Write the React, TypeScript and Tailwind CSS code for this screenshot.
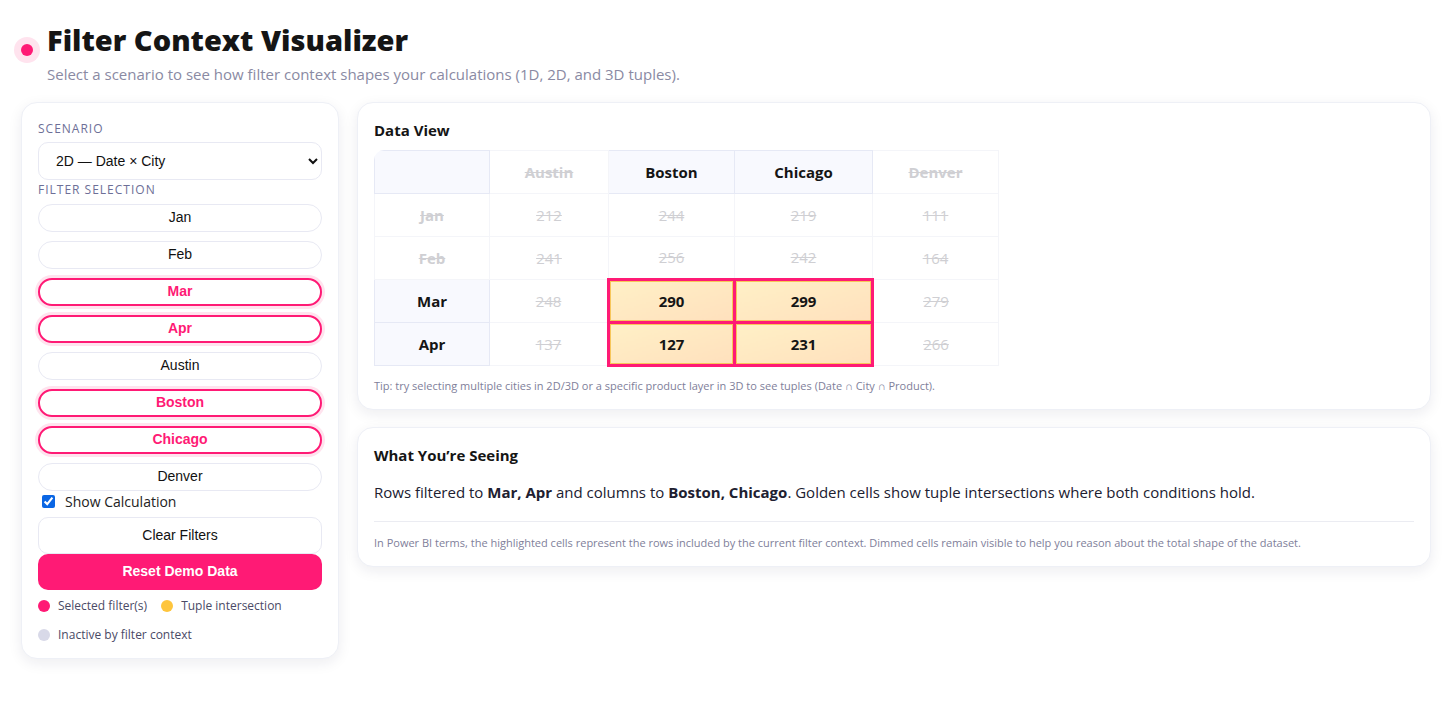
import React, { useState } from "react";

const months = ["Jan", "Feb", "Mar", "Apr"];
const cities = ["Austin", "Boston", "Chicago", "Denver"];
const data: Record<string, number[]> = {
    Jan: [212, 244, 219, 111],
    Feb: [241, 256, 242, 164],
    Mar: [248, 290, 299, 279],
    Apr: [137, 127, 231, 266],
};
const colWidths = ["w-[115px]", "w-[119px]", "w-[126px]", "w-[138px]", "w-[126px]"];

const ui = { fontFamily: '"Segoe UI", "Open Sans", "Noto Sans", sans-serif' };
const ctrl = { fontFamily: '"Liberation Sans", Arial, sans-serif' };

const FilterButton = ({ label, active, onClick }: { label: string; active: boolean; onClick: () => void }) => (
    <button
        onClick={onClick}
        style={ctrl}
        className={
            active
                ? "h-[28px] w-full rounded-full border-2 border-[#ff1a75] bg-white text-[14px] font-bold text-[#ff1a75] shadow-[0_0_0_3px_#ffe3ee]"
                : "h-[28px] w-full rounded-full border border-[#e8e9f3] bg-white text-[14px] text-[#111]"
        }
    >
        {label}
    </button>
);

const App = () => {
    const [selected, setSelected] = useState<string[]>(["Mar", "Apr", "Boston", "Chicago"]);
    const [showCalc, setShowCalc] = useState(true);
    const toggle = (k: string) =>
        setSelected((s) => (s.includes(k) ? s.filter((x) => x !== k) : [...s, k]));

    const rowOn = (m: string) => selected.includes(m);
    const colOn = (c: string) => selected.includes(c);

    return (
        <div style={ui} className="min-h-screen bg-white text-[#16162a]">
            <header className="flex gap-[14px] pl-[21px] pt-[22px]">
                <div className="mt-[22px] h-[12px] w-[12px] shrink-0 rounded-full bg-[#ff1a75] shadow-[0_0_0_7px_#ffe3ee]" />
                <div>
                    <h1 className="text-[29px] font-extrabold leading-[36px] text-[#151515]">
                        Filter Context Visualizer
                    </h1>
                    <p className="mt-[5px] text-[15px] text-[#8a8aa3]">
                        Select a scenario to see how filter context shapes your calculations (1D, 2D, and 3D tuples).
                    </p>
                </div>
            </header>

            <div className="mt-[16px] flex items-start gap-[18px] pl-[21px] pr-[14px]">
                {/* sidebar */}
                <aside className="w-[318px] shrink-0 rounded-[16px] border border-[#eef0f6] bg-white px-[16px] pb-[14px] pt-[17px] shadow-[0_4px_14px_rgba(30,30,70,0.08)]">
                    <div className="text-[12px] uppercase tracking-[1px] text-[#6d6f97]">Scenario</div>
                    <select
                        style={ctrl}
                        defaultValue="2d"
                        className="mt-[4px] h-[38px] w-full rounded-[10px] border border-[#e8e9f3] bg-white px-[13px] text-[14px] text-[#111]"
                    >
                        <option value="1d">1D — Date</option>
                        <option value="2d">2D — Date × City</option>
                        <option value="3d">3D — Date × City × Product</option>
                    </select>
                    <div className="mt-[1px] text-[12px] uppercase tracking-[1px] text-[#6d6f97]">Filter Selection</div>
                    <div className="mt-[5px] flex flex-col gap-[9px]">
                        {[...months, ...cities].map((k) => (
                            <FilterButton key={k} label={k} active={selected.includes(k)} onClick={() => toggle(k)} />
                        ))}
                    </div>
                    <label className="mt-[1px] flex items-center gap-[10px] pl-[4px] text-[14px] leading-[20px] text-[#222]">
                        <input
                            type="checkbox"
                            checked={showCalc}
                            onChange={(e) => setShowCalc(e.target.checked)}
                            className="h-[13px] w-[13px] accent-[#0a66e4]"
                        />
                        Show Calculation
                    </label>
                    <button
                        style={ctrl}
                        onClick={() => setSelected([])}
                        className="mt-[5px] h-[37px] w-full rounded-[10px] border border-[#e8e9f3] bg-white text-[14px] text-[#111]"
                    >
                        Clear Filters
                    </button>
                    <button
                        style={ctrl}
                        onClick={() => setSelected(["Mar", "Apr", "Boston", "Chicago"])}
                        className="h-[36px] w-full rounded-[10px] bg-[#ff1a75] text-[14px] font-bold text-white"
                    >
                        Reset Demo Data
                    </button>
                    <div className="mt-[7px] flex flex-wrap items-center gap-x-[14px] gap-y-[11px] text-[12px] text-[#4a4a66]">
                        <span className="flex items-center gap-[8px]">
                            <span className="h-[12px] w-[12px] rounded-full bg-[#ff1a75]" />
                            Selected filter(s)
                        </span>
                        <span className="flex items-center gap-[8px]">
                            <span className="h-[12px] w-[12px] rounded-full bg-[#fec53d]" />
                            Tuple intersection
                        </span>
                        <span className="flex items-center gap-[8px]">
                            <span className="h-[12px] w-[12px] rounded-full bg-[#d8d9e8]" />
                            Inactive by filter context
                        </span>
                    </div>
                </aside>

                {/* main */}
                <main className="flex flex-1 flex-col gap-[17px]">
                    <section className="rounded-[16px] border border-[#eef0f6] bg-white px-[16px] pb-[14px] pt-[16px] shadow-[0_4px_14px_rgba(30,30,70,0.08)]">
                        <h2 className="text-[15px] font-bold text-[#151515]">Data View</h2>
                        <div className="mt-[9px] w-fit overflow-hidden rounded-tl-[10px]">
                            <table className="table-fixed border-collapse">
                                <thead>
                                    <tr className="h-[43px]">
                                        <th className={`${colWidths[0]} border border-[#e6e9f5] bg-[#f8f9fe]`} />
                                        {cities.map((c, i) => (
                                            <th
                                                key={c}
                                                className={
                                                    colOn(c)
                                                        ? `${colWidths[i + 1]} border border-[#e6e9f5] bg-[#f8f9fe] text-[15px] font-bold text-[#151515]`
                                                        : `${colWidths[i + 1]} border border-[#f4f5f9] text-[15px] font-bold text-[#cfcfd3] line-through`
                                                }
                                            >
                                                {c}
                                            </th>
                                        ))}
                                    </tr>
                                </thead>
                                <tbody>
                                    {months.map((m) => (
                                        <tr key={m} className="h-[43px]">
                                            <th
                                                className={
                                                    rowOn(m)
                                                        ? "border border-[#e6e9f5] bg-[#f8f9fe] text-[15px] font-bold text-[#151515]"
                                                        : "border border-[#f4f5f9] text-[15px] font-bold text-[#cfcfd3] line-through"
                                                }
                                            >
                                                {m}
                                            </th>
                                            {cities.map((c, i) => {
                                                const hit = rowOn(m) && colOn(c);
                                                return (
                                                    <td
                                                        key={c}
                                                        className={
                                                            hit
                                                                ? "border-[3px] border-[#ff1a75] bg-gradient-to-br from-[#fff0c6] to-[#ffe0bd] text-center text-[15px] font-bold text-[#151515] shadow-[inset_0_0_0_1px_#f7c65a]"
                                                                : "border border-[#f4f5f9] text-center text-[15px] text-[#cfcfd3] line-through"
                                                        }
                                                    >
                                                        {data[m][i]}
                                                    </td>
                                                );
                                            })}
                                        </tr>
                                    ))}
                                </tbody>
                            </table>
                        </div>
                        <p className="mt-[11px] text-[11px] text-[#80809a]">
                            Tip: try selecting multiple cities in 2D/3D or a specific product layer in 3D to see tuples (Date ∩ City ∩ Product).
                        </p>
                    </section>

                    <section className="rounded-[16px] border border-[#eef0f6] bg-white px-[16px] pb-[15px] pt-[16px] shadow-[0_4px_14px_rgba(30,30,70,0.08)]">
                        <h2 className="text-[15px] font-bold text-[#151515]">What You’re Seeing</h2>
                        <p className="mt-[15px] text-[15px] text-[#202030]">
                            Rows filtered to <b>Mar, Apr</b> and columns to <b>Boston, Chicago</b>. Golden cells show tuple
                            intersections where both conditions hold.
                        </p>
                        <div className="mt-[17px] border-t border-[#ebecf2]" />
                        <p className="mt-[13px] text-[11px] text-[#80809a]">
                            In Power BI terms, the highlighted cells represent the rows included by the current filter context.
                            Dimmed cells remain visible to help you reason about the total shape of the dataset.
                        </p>
                    </section>
                </main>
            </div>
        </div>
    );
};

export default App;
